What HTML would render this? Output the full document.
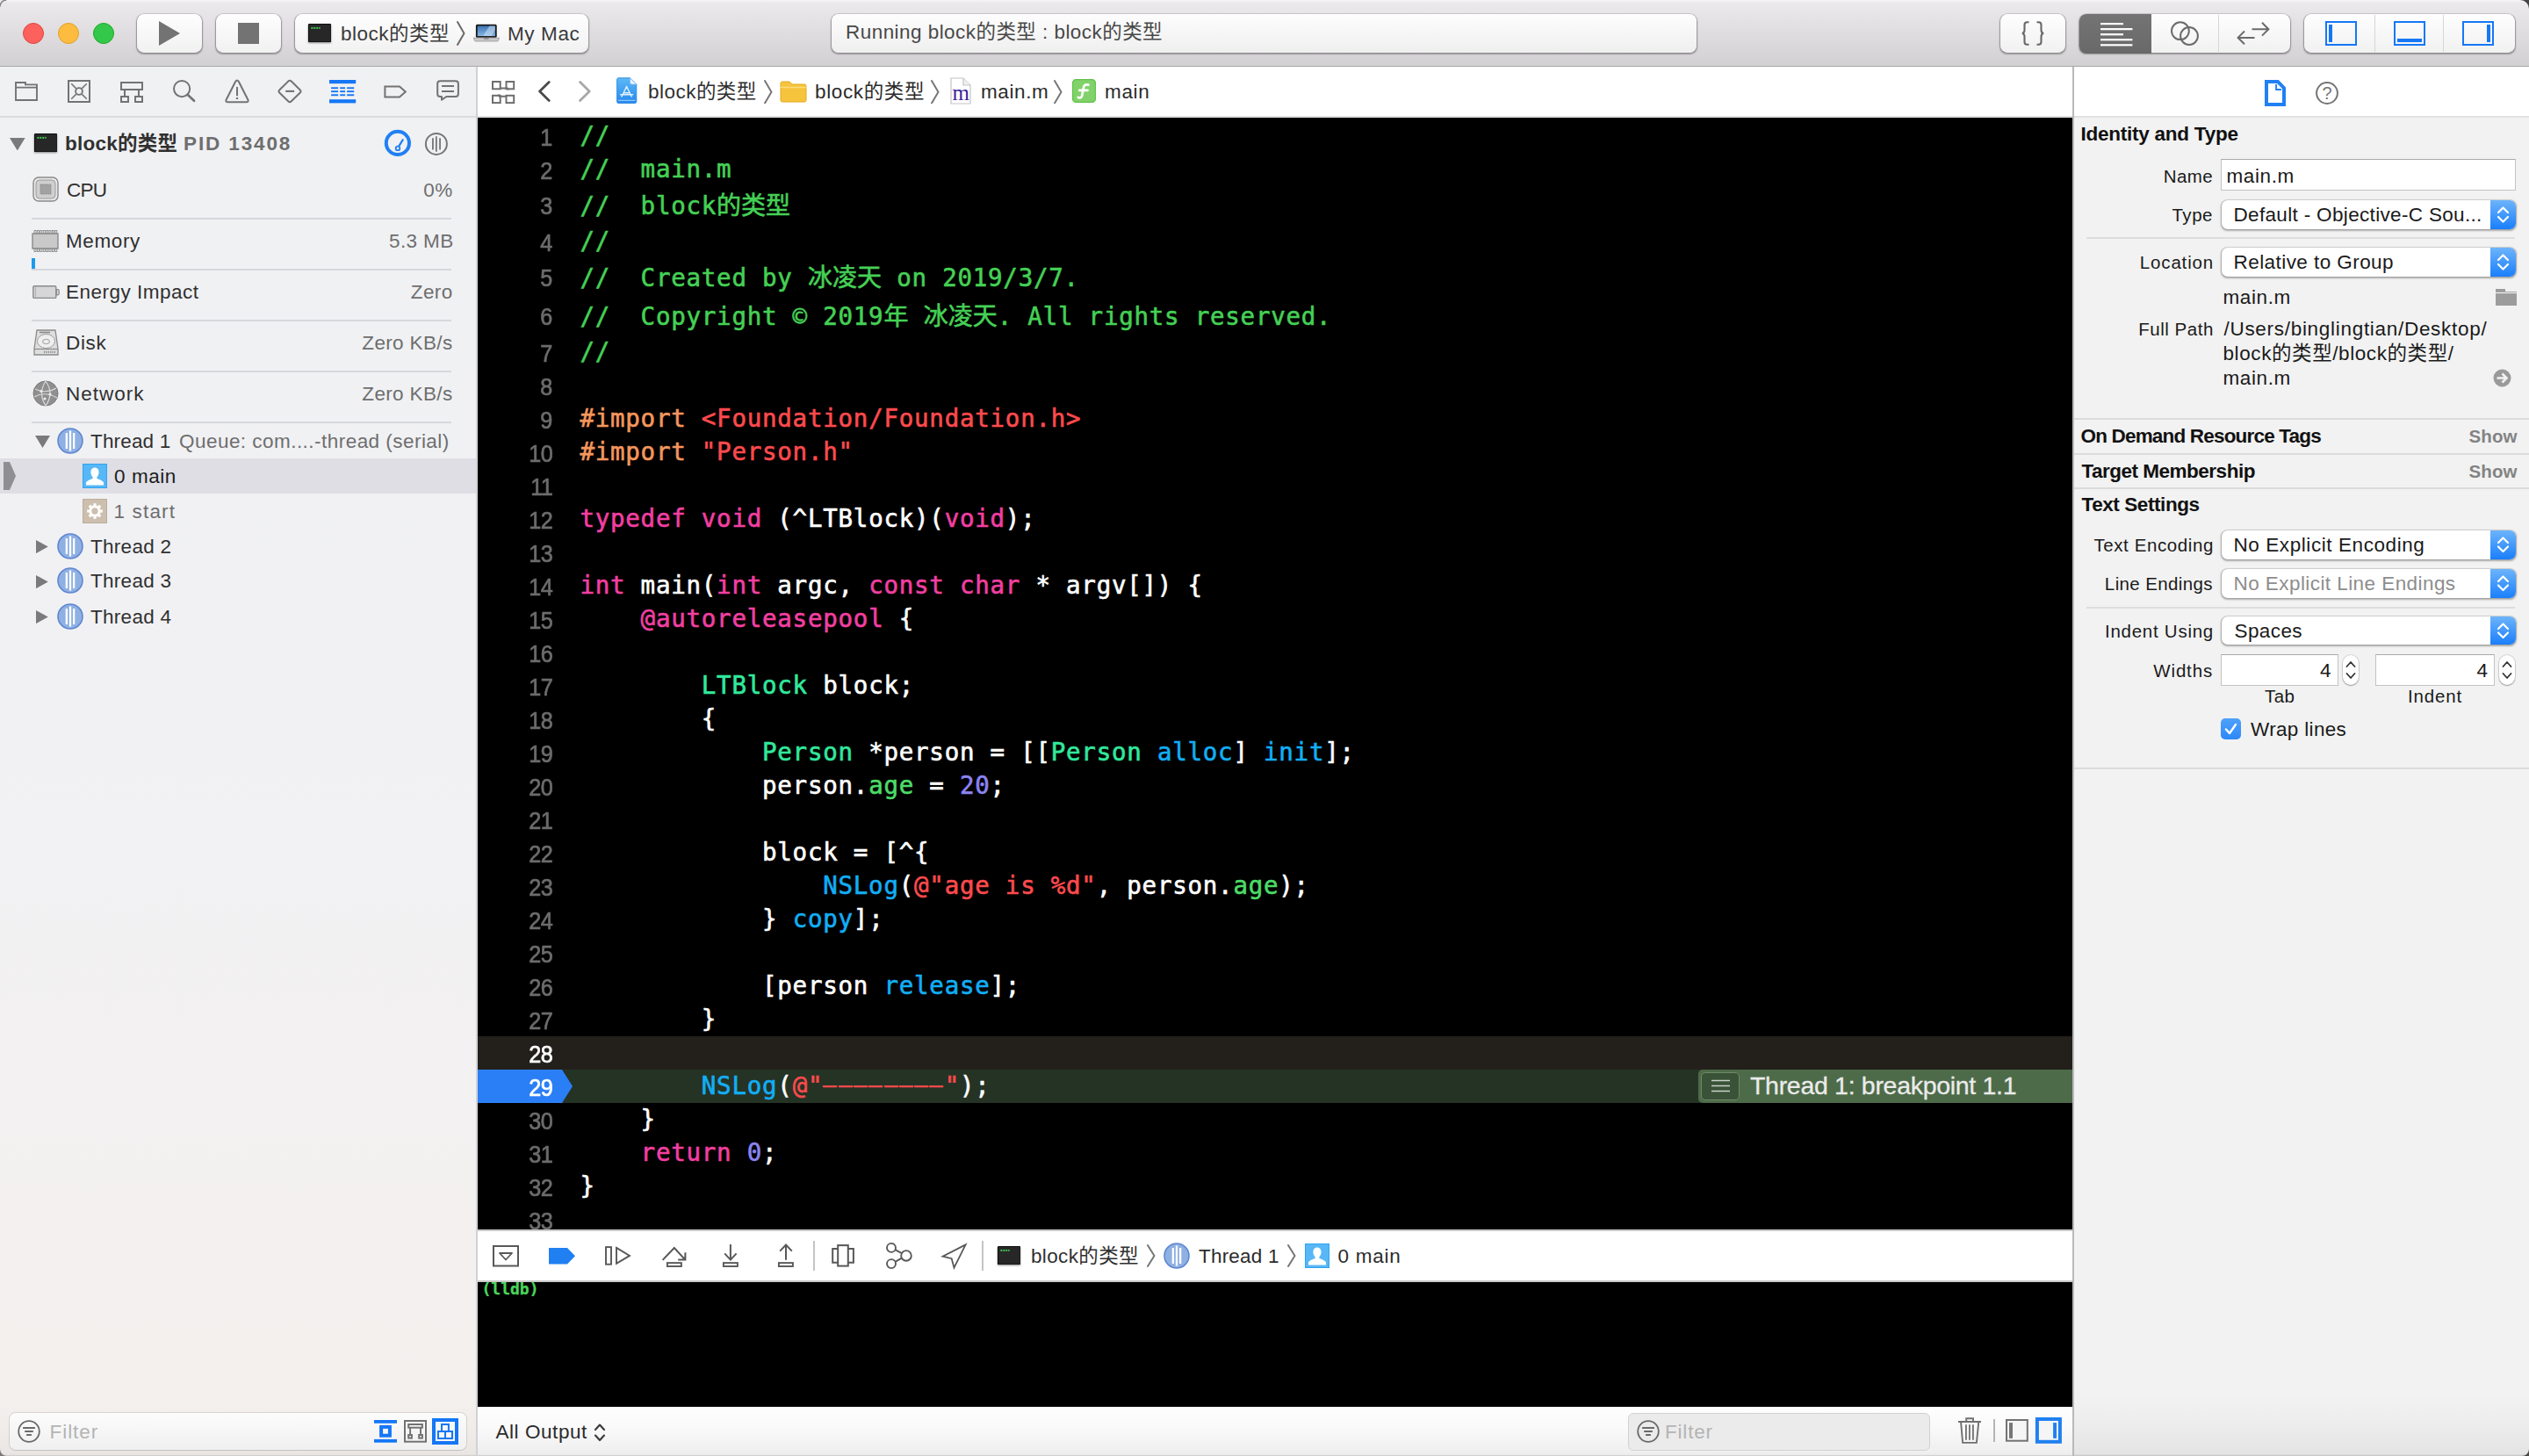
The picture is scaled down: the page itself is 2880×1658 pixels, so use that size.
<!DOCTYPE html><html><head><meta charset="utf-8"><title>Xcode</title><style>
*{box-sizing:border-box}
html,body{margin:0;padding:0}
body{width:2880px;height:1658px;overflow:hidden;position:relative;background:#000;font-family:"Liberation Sans","Noto Sans CJK SC",sans-serif;color:#303030}
.a{position:absolute;display:block}
.t{position:absolute;white-space:pre;line-height:1}
.m{font-family:"DejaVu Sans Mono","Noto Sans CJK SC",monospace}
.b{font-weight:bold}
.g{color:#6e6e6e}
#toolbar{left:0;top:0;width:2880px;height:76px;background:linear-gradient(#f4f4f4 0,#f2f1f2 1.5px,#ebe9eb 3px,#d2d0d2 100%);border-bottom:1.5px solid #a9a7a9}
.btn{border-radius:8.5px;background:linear-gradient(#fefefe,#f1f1f1);box-shadow:0 0 0 0.7px rgba(0,0,0,.13),0 1px 1.5px 0.3px rgba(0,0,0,.28)}
.pop{border-radius:7px;background:#fff;box-shadow:0 0 0 1px rgba(0,0,0,.08),0 1px 2px 0.5px rgba(0,0,0,.28)}
.popb{border-radius:0 7px 7px 0;background:linear-gradient(#6db4fb,#1a7ffb)}
.fld{background:#fff;border:1px solid #c3c3c3;border-top-color:#a9a9a9}
.sep{background:#dcdcdc;height:2px}
.ln{font-size:27.4px;-webkit-text-stroke:0.7px;letter-spacing:-0.6px;transform:scaleX(.92);transform-origin:100% 50%}
.cl{font-size:27.5px;letter-spacing:0.745px;-webkit-text-stroke:0.6px}
.cj{letter-spacing:0;font-size:28px}
.hy{display:inline-block;transform:translateY(-1.2px) scale(2.1,0.8)}
</style></head><body>
<div class="a" id="toolbar"></div>
<div class="a " style="left:26px;top:26px;width:24px;height:24px;border-radius:50%;background:#fc615d;border:1px solid #e0443e"></div>
<div class="a " style="left:66px;top:26px;width:24px;height:24px;border-radius:50%;background:#fdbc40;border:1px solid #dea123"></div>
<div class="a " style="left:106px;top:26px;width:24px;height:24px;border-radius:50%;background:#34c84a;border:1px solid #1aab29"></div>
<div class="a btn" style="left:156px;top:16px;width:74px;height:44px;"></div>
<svg class="a" style="left:181px;top:24px;" width="24" height="28" viewBox="0 0 24 28"><path d="M0 0 L24 14 L0 28Z" fill="#737373"/></svg>
<div class="a btn" style="left:246px;top:16px;width:74px;height:44px;"></div>
<div class="a " style="left:271px;top:26px;width:24px;height:24px;background:#737373"></div>
<div class="a btn" style="left:336px;top:16px;width:334px;height:44px;"></div>
<svg class="a" style="left:350.5px;top:27px;filter:drop-shadow(0 1px 1px rgba(0,0,0,.45))" width="26.325" height="21.45" viewBox="0 0 27 22"><rect x="0.5" y="0.5" width="26" height="21" rx="0.4" fill="#272727" stroke="#0b0b0b"/><rect x="3.5" y="4" width="2" height="2" fill="#3fd04f"/><rect x="6.5" y="4" width="2" height="2" fill="#3fd04f"/><rect x="9.5" y="4" width="2" height="2" fill="#3fd04f"/><rect x="12.5" y="4" width="1.5" height="2" fill="#3fd04f"/></svg>
<div id="t1" class="t" style="top:28.00px;font-size:22.5px;left:388.00px;letter-spacing:0.488px;color:#3a3a3a">block的类型</div>
<svg class="a" style="left:520px;top:24px;" width="10" height="28" viewBox="0 0 10 28"><path d="M1 1 L8.5 14 L1 27" fill="none" stroke="#6a6a6a" stroke-width="2" stroke-linecap="round" stroke-linejoin="round"/></svg>
<svg class="a" style="left:539px;top:26px;" width="30" height="23" viewBox="0 0 30 23"><defs><linearGradient id="scr" x1="0" y1="0" x2="0" y2="1"><stop offset="0" stop-color="#3f74b4"/><stop offset="1" stop-color="#86b6e6"/></linearGradient></defs><rect x="2.9" y="1.8" width="23.8" height="15" rx="1.6" fill="#151515"/><rect x="4.7" y="3.5" width="20.2" height="11.6" fill="url(#scr)"/><path d="M11 15.1 L18.5 3.5 H24.9 V8 L20.5 15.1Z" fill="#cfe3f7" opacity=".55"/><path d="M0.2 17.2 H29.6 L28.2 20.6 Q28 21 27.4 21 H2.4 Q1.8 21 1.6 20.6Z" fill="#c9c9cb" stroke="#8e8e90" stroke-width="0.7"/><rect x="12" y="17.3" width="5.6" height="1.3" fill="#7d7d7f"/></svg>
<div id="t2" class="t" style="top:28.00px;font-size:22.5px;left:578.00px;letter-spacing:0.600px;color:#3a3a3a">My Mac</div>
<div class="a " style="left:947px;top:16px;width:985px;height:44px;border-radius:8px;background:linear-gradient(#fdfdfd,#efefef);box-shadow:0 0 0 0.7px rgba(0,0,0,.13),0 1px 1.5px 0.3px rgba(0,0,0,.28)"></div>
<div id="t3" class="t" style="top:26.00px;font-size:22.5px;left:963.00px;letter-spacing:0.452px;color:#484848">Running block的类型 : block的类型</div>
<div class="a btn" style="left:2278px;top:16px;width:74px;height:44px;"></div>
<svg class="a" style="left:2300px;top:22px;" width="30" height="32" viewBox="0 0 30 32"><path d="M10.5 3.3 h-2 q-3 0 -3 3 v6 q0 3.2 -2.6 3.7 q2.6 0.5 2.6 3.7 v6 q0 3 3 3 h2 M19.5 3.3 h2 q3 0 3 3 v6 q0 3.2 2.6 3.7 q-2.6 0.5 -2.6 3.7 v6 q0 3 -3 3 h-2" fill="none" stroke="#686868" stroke-width="2.1"/></svg>
<div class="a btn" style="left:2368px;top:16px;width:240px;height:44px;"></div>
<div class="a " style="left:2367.5px;top:15.5px;width:82.5px;height:45px;border-radius:8px 0 0 8px;background:linear-gradient(#747474,#696969)"></div>
<div class="a " style="left:2526px;top:17px;width:1px;height:42px;background:#d6d6d6"></div>
<svg class="a" style="left:2392px;top:25.7px;" width="37" height="27" viewBox="0 0 37 27"><rect x="0" y="0" width="26" height="2.2" fill="#fff"/><rect x="0" y="6.05" width="36.4" height="2.2" fill="#fff"/><rect x="0" y="12.1" width="26" height="2.2" fill="#fff"/><rect x="0" y="18.1" width="36.4" height="2.2" fill="#fff"/><rect x="0" y="24.2" width="36.4" height="2.2" fill="#fff"/></svg>
<svg class="a" style="left:2470px;top:22px;" width="36" height="32" viewBox="0 0 36 32"><circle cx="12.9" cy="13.2" r="9.9" fill="none" stroke="#6b6b6b" stroke-width="2"/><circle cx="23" cy="19" r="9.9" fill="none" stroke="#6b6b6b" stroke-width="2"/></svg>
<svg class="a" style="left:2546px;top:22px;" width="40" height="32" viewBox="0 0 40 32"><path d="M18.5 11.2 H37 M30 3.8 L37.4 11.2 L30 18.6 M21.5 20.9 H3 M10 13.5 L2.6 20.9 L10 28.3" fill="none" stroke="#6b6b6b" stroke-width="2" stroke-linejoin="miter"/></svg>
<div class="a btn" style="left:2624px;top:16px;width:240px;height:44px;"></div>
<div class="a " style="left:2704px;top:17px;width:1px;height:42px;background:#d6d6d6"></div>
<div class="a " style="left:2782px;top:17px;width:1px;height:42px;background:#d6d6d6"></div>
<svg class="a" style="left:2648px;top:24px;" width="36" height="28" viewBox="0 0 36 28"><rect x="1" y="1" width="34" height="26" fill="none" stroke="#1577f6" stroke-width="2"/><rect x="4" y="4" width="4" height="20" fill="#1577f6"/></svg>
<svg class="a" style="left:2726px;top:24px;" width="36" height="28" viewBox="0 0 36 28"><rect x="1" y="1" width="34" height="26" fill="none" stroke="#1577f6" stroke-width="2"/><rect x="4" y="20" width="28" height="4" fill="#1577f6"/></svg>
<svg class="a" style="left:2804px;top:24px;" width="36" height="28" viewBox="0 0 36 28"><rect x="1" y="1" width="34" height="26" fill="none" stroke="#1577f6" stroke-width="2"/><rect x="28" y="4" width="4" height="20" fill="#1577f6"/></svg>
<div class="a " style="left:0px;top:76px;width:542px;height:1582px;background:linear-gradient(180deg,#f0f1f3 0%,#f1f1f4 45%,#f3f1f1 75%,#f3efec 100%)"></div>
<div class="a " style="left:542px;top:76px;width:2px;height:1582px;background:#d2d2d5"></div>
<div class="a " style="left:0px;top:132px;width:542px;height:2px;background:#dcdcde"></div>
<svg class="a" style="left:17px;top:93px;" width="26" height="22" viewBox="0 0 26 22"><path d="M1 1 H12 V3.4 H25 V21 H1Z M1 6.6 H25" fill="none" stroke="#737373" stroke-width="1.9" stroke-linejoin="miter"/></svg>
<svg class="a" style="left:77px;top:91px;" width="26" height="26" viewBox="0 0 26 26"><rect x="1" y="1" width="24" height="24" fill="none" stroke="#737373" stroke-width="2"/><circle cx="13" cy="13" r="3.9" fill="none" stroke="#737373" stroke-width="1.9"/><path d="M4.2 4.2 L9.6 9.6 M21.8 4.2 L16.4 9.6 M4.2 21.8 L9.6 16.4 M21.8 21.8 L16.4 16.4" stroke="#737373" stroke-width="1.5"/></svg>
<svg class="a" style="left:137px;top:93px;" width="26" height="24" viewBox="0 0 26 24"><rect x="1" y="1" width="24" height="8" fill="none" stroke="#737373" stroke-width="2"/><rect x="1" y="17" width="8" height="6" fill="none" stroke="#737373" stroke-width="2"/><rect x="17" y="17" width="8" height="6" fill="none" stroke="#737373" stroke-width="2"/><path d="M5 9 V17 M21 9 V17" fill="none" stroke="#737373" stroke-width="2"/></svg>
<svg class="a" style="left:196.8px;top:90.9px;" width="26" height="26" viewBox="0 0 26 26"><circle cx="10.1" cy="10.1" r="9.1" fill="none" stroke="#737373" stroke-width="2"/><path d="M16.6 16.8 L24 23.8" stroke="#737373" stroke-width="2.7" stroke-linecap="round"/></svg>
<svg class="a" style="left:256px;top:90px;" width="28" height="28" viewBox="0 0 28 28"><path d="M12.1 3 Q14 -0.2 15.9 3 L26.2 23.2 Q27.6 26.2 24.4 26.2 H3.6 Q0.4 26.2 1.8 23.2Z" fill="none" stroke="#737373" stroke-width="2" stroke-linejoin="round"/><path d="M14 9 V19.3" stroke="#737373" stroke-width="2"/><rect x="12.9" y="21" width="2.2" height="2" fill="#737373"/></svg>
<svg class="a" style="left:316px;top:90px;" width="28" height="28" viewBox="0 0 28 28"><path d="M12.2 2.6 Q14 0.9 15.8 2.6 L25.6 12.2 Q27.4 14 25.6 15.8 L15.8 25.3 Q14 27 12.2 25.3 L2.4 15.8 Q0.6 14 2.4 12.2Z" fill="none" stroke="#737373" stroke-width="2" stroke-linejoin="round"/><path d="M9.2 13.9 H19.1" stroke="#737373" stroke-width="2.1"/></svg>
<svg class="a" style="left:374.9px;top:90.8px;" width="31" height="27" viewBox="0 0 31 27"><rect x="0" y="0" width="30.2" height="4.2" fill="#1577f6"/><rect x="0" y="22.2" width="30.2" height="4.2" fill="#1577f6"/><rect x="2.1" y="8.3" width="8" height="1.9" fill="#1577f6"/><rect x="12.2" y="8.3" width="5.9" height="1.9" fill="#1577f6"/><rect x="20.1" y="8.3" width="8.1" height="1.9" fill="#1577f6"/><rect x="2.1" y="12.2" width="8" height="1.9" fill="#1577f6"/><rect x="12.2" y="12.2" width="5.9" height="1.9" fill="#1577f6"/><rect x="20.1" y="12.2" width="8.1" height="1.9" fill="#1577f6"/><rect x="2.1" y="16.3" width="8" height="1.9" fill="#1577f6"/><rect x="12.2" y="16.3" width="5.9" height="1.9" fill="#1577f6"/><rect x="20.1" y="16.3" width="8.1" height="1.9" fill="#1577f6"/></svg>
<svg class="a" style="left:436.5px;top:96.5px;" width="27" height="16" viewBox="0 0 27 16"><path d="M1.4 1.6 H18 L24.8 7.5 L18 13.5 H1.4Z" fill="none" stroke="#737373" stroke-width="2" stroke-linejoin="miter"/></svg>
<svg class="a" style="left:497px;top:91px;" width="27" height="25" viewBox="0 0 27 25"><path d="M4.2 1.2 H21.8 Q24.9 1.2 24.9 4.2 V16 Q24.9 19 21.8 19 H11.5 L6 22.6 V19 H4.2 Q1.2 19 1.2 16 V4.2 Q1.2 1.2 4.2 1.2Z" fill="none" stroke="#737373" stroke-width="2" stroke-linejoin="round"/><path d="M6 7 H20 M6 13.1 H20" stroke="#737373" stroke-width="2"/></svg>
<svg class="a" style="left:11px;top:156.5px;" width="17.6" height="14.5" viewBox="0 0 17.6 14.5"><path d="M0 0 H17.6 L8.8 14.5Z" fill="#7a7a7a"/></svg>
<svg class="a" style="left:38.5px;top:152px;filter:drop-shadow(0 1px 1px rgba(0,0,0,.45))" width="26.325" height="21.45" viewBox="0 0 27 22"><rect x="0.5" y="0.5" width="26" height="21" rx="0.4" fill="#272727" stroke="#0b0b0b"/><rect x="3.5" y="4" width="2" height="2" fill="#3fd04f"/><rect x="6.5" y="4" width="2" height="2" fill="#3fd04f"/><rect x="9.5" y="4" width="2" height="2" fill="#3fd04f"/><rect x="12.5" y="4" width="1.5" height="2" fill="#3fd04f"/></svg>
<div id="proc" class="t b" style="top:153.00px;font-size:22.5px;left:74.00px;letter-spacing:0.256px;">block的类型</div>
<div id="pid" class="t b g" style="top:153.00px;font-size:22.5px;left:209.00px;letter-spacing:1.875px;">PID 13408</div>
<svg class="a" style="left:436px;top:146px;" width="34" height="34" viewBox="0 0 34 34"><circle cx="16.9" cy="16.9" r="13.1" fill="none" stroke="#2080f4" stroke-width="4"/><path d="M18.3 20.4 L23.2 12.5" stroke="#2080f4" stroke-width="2.3" stroke-linecap="butt"/><circle cx="17" cy="22.9" r="2.3" fill="none" stroke="#2080f4" stroke-width="1.8"/></svg>
<svg class="a" style="left:483px;top:150px;" width="28" height="28" viewBox="0 0 28 28"><circle cx="13.9" cy="13.9" r="12" fill="none" stroke="#757575" stroke-width="2"/><path d="M9.95 7.3 V20.6 M13.85 5.2 V22.7 M18.05 7.3 V20.6" stroke="#757575" stroke-width="1.8"/></svg>
<div id="g0" class="t" style="top:206.00px;font-size:22.5px;left:76.00px;letter-spacing:-0.700px;">CPU</div>
<div id="gv0" class="t g" style="top:206.00px;font-size:22.5px;right:2364.50px;letter-spacing:0.350px;">0%</div>
<div id="g1" class="t" style="top:264.00px;font-size:22.5px;left:75.00px;letter-spacing:0.600px;">Memory</div>
<div id="gv1" class="t g" style="top:264.00px;font-size:22.5px;right:2363.50px;letter-spacing:0.350px;">5.3 MB</div>
<div id="g2" class="t" style="top:322.00px;font-size:22.5px;left:75.00px;letter-spacing:0.500px;">Energy Impact</div>
<div id="gv2" class="t g" style="top:322.00px;font-size:22.5px;right:2364.50px;letter-spacing:0.350px;">Zero</div>
<div id="g3" class="t" style="top:380.00px;font-size:22.5px;left:75.00px;letter-spacing:0.666px;">Disk</div>
<div id="gv3" class="t g" style="top:380.00px;font-size:22.5px;right:2364.50px;letter-spacing:0.350px;">Zero KB/s</div>
<div id="g4" class="t" style="top:438.00px;font-size:22.5px;left:75.00px;letter-spacing:0.999px;">Network</div>
<div id="gv4" class="t g" style="top:438.00px;font-size:22.5px;right:2364.50px;letter-spacing:0.350px;">Zero KB/s</div>
<div class="a " style="left:36px;top:248px;width:478px;height:2px;background:#d6d8dc"></div>
<div class="a " style="left:36px;top:306px;width:478px;height:2px;background:#d6d8dc"></div>
<div class="a " style="left:36px;top:364px;width:478px;height:2px;background:#d6d8dc"></div>
<div class="a " style="left:36px;top:422px;width:478px;height:2px;background:#d6d8dc"></div>
<div class="a " style="left:36px;top:480px;width:478px;height:2px;background:#d6d8dc"></div>
<div class="a " style="left:36px;top:294px;width:4px;height:12px;background:#1b9aee"></div>
<svg class="a" style="left:37px;top:201px;" width="30" height="29" viewBox="0 0 30 29"><rect x="1" y="1" width="28" height="27" rx="6" fill="#e9e9e9" stroke="#8a8a8a" stroke-width="1.4"/><rect x="4" y="4" width="22" height="21" rx="4" fill="#cfcfcf" stroke="#9a9a9a" stroke-width="1"/><rect x="9" y="9" width="12" height="11" fill="#a2a2a2" stroke="#8a8a8a" stroke-width="1" stroke-dasharray="1.5 1"/></svg>
<svg class="a" style="left:36px;top:262px;" width="31" height="25" viewBox="0 0 31 25"><rect x="1" y="4" width="29" height="17" fill="#c9c9c9" stroke="#8a8a8a" stroke-width="1.4"/><rect x="3" y="0.5" width="2" height="3.5" fill="none" stroke="#8a8a8a" stroke-width="0.9"/><rect x="3" y="21" width="2" height="3.5" fill="none" stroke="#8a8a8a" stroke-width="0.9"/><rect x="6.4" y="0.5" width="2" height="3.5" fill="none" stroke="#8a8a8a" stroke-width="0.9"/><rect x="6.4" y="21" width="2" height="3.5" fill="none" stroke="#8a8a8a" stroke-width="0.9"/><rect x="9.8" y="0.5" width="2" height="3.5" fill="none" stroke="#8a8a8a" stroke-width="0.9"/><rect x="9.8" y="21" width="2" height="3.5" fill="none" stroke="#8a8a8a" stroke-width="0.9"/><rect x="13.2" y="0.5" width="2" height="3.5" fill="none" stroke="#8a8a8a" stroke-width="0.9"/><rect x="13.2" y="21" width="2" height="3.5" fill="none" stroke="#8a8a8a" stroke-width="0.9"/><rect x="16.6" y="0.5" width="2" height="3.5" fill="none" stroke="#8a8a8a" stroke-width="0.9"/><rect x="16.6" y="21" width="2" height="3.5" fill="none" stroke="#8a8a8a" stroke-width="0.9"/><rect x="20" y="0.5" width="2" height="3.5" fill="none" stroke="#8a8a8a" stroke-width="0.9"/><rect x="20" y="21" width="2" height="3.5" fill="none" stroke="#8a8a8a" stroke-width="0.9"/><rect x="23.4" y="0.5" width="2" height="3.5" fill="none" stroke="#8a8a8a" stroke-width="0.9"/><rect x="23.4" y="21" width="2" height="3.5" fill="none" stroke="#8a8a8a" stroke-width="0.9"/><rect x="26.8" y="0.5" width="2" height="3.5" fill="none" stroke="#8a8a8a" stroke-width="0.9"/><rect x="26.8" y="21" width="2" height="3.5" fill="none" stroke="#8a8a8a" stroke-width="0.9"/></svg>
<svg class="a" style="left:37px;top:325px;" width="31" height="16" viewBox="0 0 31 16"><rect x="0.8" y="0.8" width="26" height="13.6" rx="1.2" fill="#d6d6d8" stroke="#8a8a8a" stroke-width="1.4"/><path d="M3.4 1.5 V13.8" stroke="#a9a9ab" stroke-width="0.9"/><path d="M27.3 4.6 H28.6 Q30.2 4.6 30.2 6.2 V9.2 Q30.2 10.8 28.6 10.8 H27.3Z" fill="#d6d6d8" stroke="#8a8a8a" stroke-width="1.2"/></svg>
<svg class="a" style="left:38px;top:375px;" width="29" height="30" viewBox="0 0 29 30"><path d="M4 1 H25 L28 22 V29 H1 V22Z" fill="#dedede" stroke="#8a8a8a" stroke-width="1.3"/><path d="M1 22.5 H28" stroke="#8a8a8a" stroke-width="1.2"/><ellipse cx="14.5" cy="13.5" rx="10" ry="8" fill="#efefef" stroke="#9a9a9a"/><ellipse cx="14.5" cy="14" rx="4" ry="2.6" fill="none" stroke="#9a9a9a"/><path d="M7 3.5 H19" stroke="#8a8a8a" stroke-width="1.6"/><path d="M12 25.8 H25" stroke="#8a8a8a" stroke-width="2.2" stroke-dasharray="1.2 1.2"/></svg>
<svg class="a" style="left:37px;top:433px;" width="30" height="30" viewBox="0 0 30 30"><circle cx="15" cy="15" r="14" fill="#8f8f8f" stroke="#7a7a7a"/><path d="M3 10 Q15 16 27 9 M2 19 Q14 12 28 20 M15 1 Q6 15 15 29 M15 1 Q25 15 15 29" fill="none" stroke="#d9d9d9" stroke-width="1.2"/><circle cx="10" cy="12.5" r="1.6" fill="#eee"/><circle cx="20" cy="16" r="1.6" fill="#eee"/><circle cx="14" cy="21" r="1.6" fill="#eee"/></svg>
<svg class="a" style="left:40px;top:496px;" width="17" height="14" viewBox="0 0 17 14"><path d="M0 0 H17 L8.5 14Z" fill="#7a7a7a"/></svg>
<svg class="a" style="left:65px;top:487px;" width="30" height="30" viewBox="0 0 30 30"><circle cx="15" cy="15" r="14" fill="#8fb0e3" stroke="#5f87d0" stroke-width="1.6"/><path d="M10.85 5.9 V24.1 M15 3.6 V26.4 M19.15 5.9 V24.1" stroke="#fff" stroke-width="2.3"/></svg>
<div id="th1" class="t" style="top:492.00px;font-size:22.5px;left:103.00px;letter-spacing:0.166px;">Thread 1</div>
<div id="th1q" class="t g" style="top:492.00px;font-size:22.5px;left:204.00px;letter-spacing:0.463px;">Queue: com....-thread (serial)</div>
<div class="a " style="left:0px;top:522px;width:542px;height:40px;background:#dfdee5"></div>
<svg class="a" style="left:4px;top:526px;" width="14" height="32" viewBox="0 0 14 32"><path d="M0 0 H7 L14 16 L7 32 H0Z" fill="#8e8e93"/></svg>
<svg class="a" style="left:94px;top:528px;" width="28" height="28" viewBox="0 0 28 28"><rect x="0.5" y="0.5" width="27" height="27" fill="#57b7f7" stroke="#30a4f0"/><path d="M14 4.5c3 0 4.6 2.3 4.6 5.2c0 2.5-1 4.5-2.2 5.6v1.6c2.6 1 6.6 2.4 7.6 4.4v3.2H4v-3.2c1-2 5-3.4 7.6-4.4v-1.6c-1.2-1.1-2.2-3.1-2.2-5.6c0-2.9 1.6-5.2 4.6-5.2z" fill="#fff"/></svg>
<div id="fr0" class="t" style="top:532.00px;font-size:22.5px;left:130.00px;letter-spacing:0.560px;color:#1d1d1d">0 main</div>
<svg class="a" style="left:94px;top:568px;" width="28" height="28" viewBox="0 0 28 28"><rect x="0.5" y="0.5" width="27" height="27" fill="#cdbfae" stroke="#bcae9c"/><circle cx="14" cy="14" r="5.2" fill="none" stroke="#fff" stroke-width="3"/><path d="M20.20 14.00 L22.80 14.00" stroke="#fff" stroke-width="3.2"/><path d="M18.38 18.38 L20.22 20.22" stroke="#fff" stroke-width="3.2"/><path d="M14.00 20.20 L14.00 22.80" stroke="#fff" stroke-width="3.2"/><path d="M9.62 18.38 L7.78 20.22" stroke="#fff" stroke-width="3.2"/><path d="M7.80 14.00 L5.20 14.00" stroke="#fff" stroke-width="3.2"/><path d="M9.62 9.62 L7.78 7.78" stroke="#fff" stroke-width="3.2"/><path d="M14.00 7.80 L14.00 5.20" stroke="#fff" stroke-width="3.2"/><path d="M18.38 9.62 L20.22 7.78" stroke="#fff" stroke-width="3.2"/></svg>
<div id="fr1" class="t g" style="top:572.00px;font-size:22.5px;left:129.50px;letter-spacing:1.166px;">1 start</div>
<svg class="a" style="left:41.4px;top:615px;" width="13.8" height="15.2" viewBox="0 0 13.8 15.2"><path d="M0 0 L13.8 7.6 L0 15.2Z" fill="#7a7a7a"/></svg>
<svg class="a" style="left:65px;top:606.5px;" width="30" height="30" viewBox="0 0 30 30"><circle cx="15" cy="15" r="14" fill="#8fb0e3" stroke="#5f87d0" stroke-width="1.6"/><path d="M10.85 5.9 V24.1 M15 3.6 V26.4 M19.15 5.9 V24.1" stroke="#fff" stroke-width="2.3"/></svg>
<div id="th2" class="t" style="top:612.00px;font-size:22.5px;left:103.00px;letter-spacing:0.285px;">Thread 2</div>
<svg class="a" style="left:41.4px;top:654.9px;" width="13.8" height="15.2" viewBox="0 0 13.8 15.2"><path d="M0 0 L13.8 7.6 L0 15.2Z" fill="#7a7a7a"/></svg>
<svg class="a" style="left:65px;top:646.4px;" width="30" height="30" viewBox="0 0 30 30"><circle cx="15" cy="15" r="14" fill="#8fb0e3" stroke="#5f87d0" stroke-width="1.6"/><path d="M10.85 5.9 V24.1 M15 3.6 V26.4 M19.15 5.9 V24.1" stroke="#fff" stroke-width="2.3"/></svg>
<div id="th3" class="t" style="top:651.00px;font-size:22.5px;left:103.00px;letter-spacing:0.285px;">Thread 3</div>
<svg class="a" style="left:41.4px;top:695px;" width="13.8" height="15.2" viewBox="0 0 13.8 15.2"><path d="M0 0 L13.8 7.6 L0 15.2Z" fill="#7a7a7a"/></svg>
<svg class="a" style="left:65px;top:686.5px;" width="30" height="30" viewBox="0 0 30 30"><circle cx="15" cy="15" r="14" fill="#8fb0e3" stroke="#5f87d0" stroke-width="1.6"/><path d="M10.85 5.9 V24.1 M15 3.6 V26.4 M19.15 5.9 V24.1" stroke="#fff" stroke-width="2.3"/></svg>
<div id="th4" class="t" style="top:692.00px;font-size:22.5px;left:103.00px;letter-spacing:0.285px;">Thread 4</div>
<div class="a " style="left:0px;top:1600px;width:542px;height:58px;background:linear-gradient(rgba(0,0,0,0),rgba(0,0,0,.015) 50%,rgba(0,0,0,.04) 97%,rgba(0,0,0,.18) 100%);pointer-events:none"></div>
<div class="a " style="left:10.7px;top:1608.6px;width:520.8px;height:42.6px;border-radius:7px;background:linear-gradient(#fcfcfc,#f0f0f0);box-shadow:0 0 0 1px rgba(90,70,60,.16),0 1px 1px rgba(0,0,0,.06)"></div>
<svg class="a" style="left:20px;top:1617px;" width="26" height="26" viewBox="0 0 26 26"><circle cx="13" cy="13" r="11.8" fill="none" stroke="#6a6a6a" stroke-width="1.8"/><path d="M6.1 9 H19.9 M8.2 13.05 H17.8 M10.1 17.1 H15.9" stroke="#6a6a6a" stroke-width="2"/></svg>
<div id="filt1" class="t" style="top:1620.00px;font-size:22.5px;left:56.50px;letter-spacing:0.960px;color:#b4b4b4">Filter</div>
<svg class="a" style="left:426px;top:1617.2px;" width="26" height="26" viewBox="0 0 26 26"><rect x="0" y="0" width="26" height="3.8" fill="#1577f6"/><rect x="0" y="21.9" width="26" height="3.8" fill="#1577f6"/><rect x="8.1" y="7.9" width="9.8" height="9.8" fill="none" stroke="#1577f6" stroke-width="4"/></svg>
<svg class="a" style="left:460px;top:1617.2px;" width="26" height="26" viewBox="0 0 26 26"><rect x="1" y="1" width="24" height="23.7" fill="none" stroke="#727272" stroke-width="2"/><rect x="5.2" y="5" width="15.7" height="3.7" fill="none" stroke="#727272" stroke-width="2"/><rect x="5.2" y="17" width="3.7" height="3.6" fill="none" stroke="#727272" stroke-width="2"/><rect x="17.2" y="17" width="3.7" height="3.6" fill="none" stroke="#727272" stroke-width="2"/><path d="M7.1 9 V16.5 M19 9 V16.5" stroke="#727272" stroke-width="1.9"/></svg>
<svg class="a" style="left:492px;top:1615px;" width="30" height="30" viewBox="0 0 30 30"><rect x="2" y="2" width="26" height="26" fill="#f6f6f6" stroke="#1577f6" stroke-width="4"/><rect x="11" y="7" width="7.9" height="8" fill="none" stroke="#1577f6" stroke-width="2"/><rect x="7" y="15" width="16" height="8" fill="none" stroke="#1577f6" stroke-width="2"/><path d="M15 15 V23" stroke="#1577f6" stroke-width="2"/></svg>
<div class="a " style="left:544px;top:76px;width:1816px;height:56px;background:#fff"></div>
<div class="a " style="left:544px;top:132px;width:1816px;height:2px;background:#dedede"></div>
<svg class="a" style="left:559.8px;top:91.8px;" width="27" height="27" viewBox="0 0 27 27"><rect x="1" y="1" width="8.7" height="8.3" fill="none" stroke="#6e6e6e" stroke-width="2"/><rect x="16.5" y="1" width="8.7" height="8.3" fill="none" stroke="#6e6e6e" stroke-width="2"/><rect x="1" y="16.8" width="8.7" height="8.3" fill="none" stroke="#6e6e6e" stroke-width="2"/><rect x="16.5" y="16.8" width="8.7" height="8.3" fill="none" stroke="#6e6e6e" stroke-width="2"/><path d="M10 8.6 H18.5 M8 17.8 H16.5 M18.5 8.6 V10.5 M8 15.5 V17.8" stroke="#6e6e6e" stroke-width="2" fill="none"/></svg>
<svg class="a" style="left:612px;top:92px;" width="16" height="24" viewBox="0 0 16 24"><path d="M13.2 1.6 L2.6 12 L13.2 22.4" fill="none" stroke="#4a4a4a" stroke-width="2.8" stroke-linecap="round" stroke-linejoin="round"/></svg>
<svg class="a" style="left:658.4px;top:92px;" width="16" height="24" viewBox="0 0 16 24"><path d="M2.6 1.6 L13.2 12 L2.6 22.4" fill="none" stroke="#a8a8a8" stroke-width="2.8" stroke-linecap="round" stroke-linejoin="round"/></svg>
<svg class="a" style="left:702.4px;top:88.4px;" width="24" height="31" viewBox="0 0 24 31"><defs><linearGradient id="xp" x1="0" y1="0" x2="0" y2="1"><stop offset="0" stop-color="#5cb9f6"/><stop offset="1" stop-color="#2588ef"/></linearGradient></defs><path d="M2.4 0.8 H15.5 L22.8 8 V27.6 Q22.8 29.6 20.8 29.6 H2.4 Q0.6 29.6 0.6 27.6 V2.6 Q0.6 0.8 2.4 0.8Z" fill="url(#xp)" stroke="#2d86df" stroke-width="0.9"/><path d="M15.5 0.8 V6 Q15.5 8 17.5 8 H22.8Z" fill="#e6f2fd" stroke="#7fb9ee" stroke-width="0.6"/><path d="M2 26.3 H21.4" stroke="#a8d4fa" stroke-width="1"/><path d="M11.6 10.5 L6 22 M11.6 10.5 L17.2 22 M8 17.8 H15.2 M4.6 19.8 H18.6" stroke="#e3f1fe" stroke-width="1.4" fill="none" stroke-linecap="round"/></svg>
<div id="jb1" class="t" style="top:94.00px;font-size:22.5px;left:738.00px;letter-spacing:0.471px;color:#303030">block的类型</div>
<svg class="a" style="left:870px;top:90.5px;" width="10" height="27.5" viewBox="0 0 10 27.5"><path d="M1 1 L8.5 13.75 L1 26.5" fill="none" stroke="#777" stroke-width="2" stroke-linecap="round" stroke-linejoin="round"/></svg>
<svg class="a" style="left:888px;top:92px;" width="31" height="25" viewBox="0 0 31 25"><path d="M1 3 Q1 1 3 1 H11 L14 4 H28 Q30 4 30 6 V22 Q30 24 28 24 H3 Q1 24 1 22Z" fill="#f5c33c" stroke="#e3ab1e" stroke-width="1"/><path d="M1 7.5 H30" stroke="#fbdc7a" stroke-width="1.5"/></svg>
<div id="jb2" class="t" style="top:94.00px;font-size:22.5px;left:928.00px;letter-spacing:0.631px;color:#2b2b2b">block的类型</div>
<svg class="a" style="left:1060px;top:90.5px;" width="10" height="27.5" viewBox="0 0 10 27.5"><path d="M1 1 L8.5 13.75 L1 26.5" fill="none" stroke="#777" stroke-width="2" stroke-linecap="round" stroke-linejoin="round"/></svg>
<svg class="a" style="left:1082px;top:88px;" width="24" height="31" viewBox="0 0 24 31"><path d="M1 1 H15 L23 9 V30 H1Z" fill="#fff" stroke="#c4c4c4" stroke-width="1.2"/><path d="M15 1 V9 H23" fill="#f0f0f0" stroke="#c4c4c4" stroke-width="1.2"/><text x="12.3" y="26.2" font-size="25" font-family="Liberation Serif,serif" fill="#3b1f9c" text-anchor="middle">m</text></svg>
<div id="jb3" class="t" style="top:94.00px;font-size:22.5px;left:1117.00px;letter-spacing:0.600px;color:#2b2b2b">main.m</div>
<svg class="a" style="left:1200px;top:90.5px;" width="10" height="27.5" viewBox="0 0 10 27.5"><path d="M1 1 L8.5 13.75 L1 26.5" fill="none" stroke="#777" stroke-width="2" stroke-linecap="round" stroke-linejoin="round"/></svg>
<svg class="a" style="left:1220.5px;top:90px;" width="27" height="27" viewBox="0 0 27 27"><rect x="0.5" y="0.5" width="26" height="26" rx="4.5" fill="#82d26c" stroke="#60c24a" stroke-width="1.4"/><path d="M18.5 6.6 Q13.6 5.2 12.9 10 L11.3 18.5 Q10.6 22.4 6.8 21 M8.2 12.8 H17.6" fill="none" stroke="#fff" stroke-width="2.7" stroke-linecap="round"/></svg>
<div id="jb4" class="t" style="top:94.00px;font-size:22.5px;left:1258.00px;letter-spacing:0.666px;color:#2b2b2b">main</div>
<div class="a " style="left:544px;top:134px;width:1816px;height:1266px;background:#000"></div>
<div class="a " style="left:544px;top:1180px;width:1816px;height:38px;background:#23201b"></div>
<div class="a " style="left:544px;top:1218px;width:1816px;height:38px;background:#253325"></div>
<svg class="a" style="left:544px;top:1218px;" width="108" height="38" viewBox="0 0 108 38"><path d="M0 0 H96 L108 19 L96 38 H0Z" fill="#2b7ff6"/></svg>
<div class="a " style="left:1934px;top:1218px;width:426px;height:38px;background:#4e6b49;border-radius:5px 0 0 5px"></div>
<div class="a " style="left:1937px;top:1221px;width:44px;height:32px;background:#3a5237;border:1.5px solid #6d8a67;border-radius:5px"></div>
<svg class="a" style="left:1949px;top:1229px;" width="21" height="15" viewBox="0 0 21 15"><path d="M0 1.5 H21 M0 7.5 H21 M0 13.5 H21" stroke="#c8d4c6" stroke-width="1.6"/></svg>
<div id="ann" class="t" style="top:1222.00px;font-size:28.5px;left:1993.00px;letter-spacing:-0.304px;color:#ebebeb;-webkit-text-stroke:0.3px">Thread 1: breakpoint 1.1</div>
<div class="a" style="left:544px;top:134px;width:1816px;height:1266px;overflow:hidden">
<div class="t ln" style="right:1730.9px;top:9.00px;color:#6c6c6c">1</div>
<div class="t m cl" style="left:116.4px;top:7.00px"><span style="color:#45d055">//</span></div>
<div class="t ln" style="right:1730.9px;top:47.00px;color:#6c6c6c">2</div>
<div class="t m cl" style="left:116.4px;top:45.00px"><span style="color:#45d055">//  main.m</span></div>
<div class="t ln" style="right:1730.9px;top:87.00px;color:#6c6c6c">3</div>
<div class="t m cl" style="left:116.4px;top:87.00px"><span style="color:#45d055">//  block</span><span style="color:#45d055"><span class="cj">的类型</span></span></div>
<div class="t ln" style="right:1730.9px;top:129.00px;color:#6c6c6c">4</div>
<div class="t m cl" style="left:116.4px;top:127.00px"><span style="color:#45d055">//</span></div>
<div class="t ln" style="right:1730.9px;top:169.00px;color:#6c6c6c">5</div>
<div class="t m cl" style="left:116.4px;top:169.00px"><span style="color:#45d055">//  Created by </span><span style="color:#45d055"><span class="cj">冰凌天</span></span><span style="color:#45d055"> on 2019/3/7.</span></div>
<div class="t ln" style="right:1730.9px;top:213.00px;color:#6c6c6c">6</div>
<div class="t m cl" style="left:116.4px;top:213.00px"><span style="color:#45d055">//  Copyright © 2019</span><span style="color:#45d055"><span class="cj">年</span></span><span style="color:#45d055"> </span><span style="color:#45d055"><span class="cj">冰凌天</span></span><span style="color:#45d055">. All rights reserved.</span></div>
<div class="t ln" style="right:1730.9px;top:255.00px;color:#6c6c6c">7</div>
<div class="t m cl" style="left:116.4px;top:253.00px"><span style="color:#45d055">//</span></div>
<div class="t ln" style="right:1730.9px;top:293.00px;color:#6c6c6c">8</div>
<div class="t ln" style="right:1730.9px;top:331.00px;color:#6c6c6c">9</div>
<div class="t m cl" style="left:116.4px;top:329.00px"><span style="color:#f4965c">#import </span><span style="color:#fc4a4d">&lt;Foundation/Foundation.h&gt;</span></div>
<div class="t ln" style="right:1730.9px;top:369.00px;color:#6c6c6c">10</div>
<div class="t m cl" style="left:116.4px;top:367.00px"><span style="color:#f4965c">#import </span><span style="color:#fc4a4d">"Person.h"</span></div>
<div class="t ln" style="right:1730.9px;top:407.00px;color:#6c6c6c">11</div>
<div class="t ln" style="right:1730.9px;top:445.00px;color:#6c6c6c">12</div>
<div class="t m cl" style="left:116.4px;top:443.00px"><span style="color:#f23fa1">typedef void</span><span style="color:#fff"> (^LTBlock)(</span><span style="color:#f23fa1">void</span><span style="color:#fff">);</span></div>
<div class="t ln" style="right:1730.9px;top:483.00px;color:#6c6c6c">13</div>
<div class="t ln" style="right:1730.9px;top:521.00px;color:#6c6c6c">14</div>
<div class="t m cl" style="left:116.4px;top:519.00px"><span style="color:#f23fa1">int</span><span style="color:#fff"> main(</span><span style="color:#f23fa1">int</span><span style="color:#fff"> argc, </span><span style="color:#f23fa1">const char</span><span style="color:#fff"> * argv[]) {</span></div>
<div class="t ln" style="right:1730.9px;top:559.00px;color:#6c6c6c">15</div>
<div class="t m cl" style="left:116.4px;top:557.00px"><span style="color:#fff">    </span><span style="color:#f23fa1">@autoreleasepool</span><span style="color:#fff"> {</span></div>
<div class="t ln" style="right:1730.9px;top:597.00px;color:#6c6c6c">16</div>
<div class="t ln" style="right:1730.9px;top:635.00px;color:#6c6c6c">17</div>
<div class="t m cl" style="left:116.4px;top:633.00px"><span style="color:#fff">        </span><span style="color:#31e89c">LTBlock</span><span style="color:#fff"> block;</span></div>
<div class="t ln" style="right:1730.9px;top:673.00px;color:#6c6c6c">18</div>
<div class="t m cl" style="left:116.4px;top:671.00px"><span style="color:#fff">        {</span></div>
<div class="t ln" style="right:1730.9px;top:711.00px;color:#6c6c6c">19</div>
<div class="t m cl" style="left:116.4px;top:709.00px"><span style="color:#fff">            </span><span style="color:#31e89c">Person</span><span style="color:#fff"> *person = [[</span><span style="color:#31e89c">Person</span><span style="color:#fff"> </span><span style="color:#12aef5">alloc</span><span style="color:#fff">] </span><span style="color:#12aef5">init</span><span style="color:#fff">];</span></div>
<div class="t ln" style="right:1730.9px;top:749.00px;color:#6c6c6c">20</div>
<div class="t m cl" style="left:116.4px;top:747.00px"><span style="color:#fff">            person.</span><span style="color:#4bdc66">age</span><span style="color:#fff"> = </span><span style="color:#8c84f2">20</span><span style="color:#fff">;</span></div>
<div class="t ln" style="right:1730.9px;top:787.00px;color:#6c6c6c">21</div>
<div class="t ln" style="right:1730.9px;top:825.00px;color:#6c6c6c">22</div>
<div class="t m cl" style="left:116.4px;top:823.00px"><span style="color:#fff">            block = [^{</span></div>
<div class="t ln" style="right:1730.9px;top:863.00px;color:#6c6c6c">23</div>
<div class="t m cl" style="left:116.4px;top:861.00px"><span style="color:#fff">                </span><span style="color:#12aef5">NSLog</span><span style="color:#fff">(</span><span style="color:#fc4a4d">@"age is %d"</span><span style="color:#fff">, person.</span><span style="color:#4bdc66">age</span><span style="color:#fff">);</span></div>
<div class="t ln" style="right:1730.9px;top:901.00px;color:#6c6c6c">24</div>
<div class="t m cl" style="left:116.4px;top:899.00px"><span style="color:#fff">            } </span><span style="color:#12aef5">copy</span><span style="color:#fff">];</span></div>
<div class="t ln" style="right:1730.9px;top:939.00px;color:#6c6c6c">25</div>
<div class="t ln" style="right:1730.9px;top:977.00px;color:#6c6c6c">26</div>
<div class="t m cl" style="left:116.4px;top:975.00px"><span style="color:#fff">            [person </span><span style="color:#12aef5">release</span><span style="color:#fff">];</span></div>
<div class="t ln" style="right:1730.9px;top:1015.00px;color:#6c6c6c">27</div>
<div class="t m cl" style="left:116.4px;top:1013.00px"><span style="color:#fff">        }</span></div>
<div class="t ln" style="right:1730.9px;top:1053.00px;color:#fff">28</div>
<div class="t ln" style="right:1730.9px;top:1091.00px;color:#fff">29</div>
<div class="t m cl" style="left:116.4px;top:1089.00px"><span style="color:#fff">        </span><span style="color:#12aef5">NSLog</span><span style="color:#fff">(</span><span style="color:#fc4a4d">@"<span class="hy">-</span><span class="hy">-</span><span class="hy">-</span><span class="hy">-</span><span class="hy">-</span><span class="hy">-</span><span class="hy">-</span><span class="hy">-</span>"</span><span style="color:#fff">);</span></div>
<div class="t ln" style="right:1730.9px;top:1129.00px;color:#6c6c6c">30</div>
<div class="t m cl" style="left:116.4px;top:1127.00px"><span style="color:#fff">    }</span></div>
<div class="t ln" style="right:1730.9px;top:1167.00px;color:#6c6c6c">31</div>
<div class="t m cl" style="left:116.4px;top:1165.00px"><span style="color:#fff">    </span><span style="color:#f23fa1">return</span><span style="color:#fff"> </span><span style="color:#8c84f2">0</span><span style="color:#fff">;</span></div>
<div class="t ln" style="right:1730.9px;top:1205.00px;color:#6c6c6c">32</div>
<div class="t m cl" style="left:116.4px;top:1203.00px"><span style="color:#fff">}</span></div>
<div class="t ln" style="right:1730.9px;top:1243.00px;color:#6c6c6c">33</div>
</div>
<div class="a " style="left:544px;top:1400px;width:1816px;height:2px;background:#c9c9c9"></div>
<div class="a " style="left:544px;top:1402px;width:1816px;height:56px;background:#fff"></div>
<div class="a " style="left:544px;top:1458px;width:1816px;height:2px;background:#c9c9c9"></div>
<svg class="a" style="left:561px;top:1418px;" width="30" height="25" viewBox="0 0 30 25"><rect x="1" y="1" width="28" height="22.5" fill="none" stroke="#585858" stroke-width="2"/><path d="M8 9 H22 L15 16.5Z" fill="none" stroke="#585858" stroke-width="1.8" stroke-linejoin="round"/></svg>
<svg class="a" style="left:625px;top:1420.8px;" width="31" height="19" viewBox="0 0 31 19"><path d="M0 0 H21 L30 9.2 L21 18.4 H0Z" fill="#2080f2"/></svg>
<svg class="a" style="left:689px;top:1419px;" width="31" height="23" viewBox="0 0 31 23"><rect x="1" y="1.1" width="6" height="19.6" fill="none" stroke="#585858" stroke-width="1.9"/><path d="M13 1.9 L28 10.9 L13 19.9Z" fill="none" stroke="#585858" stroke-width="1.9" stroke-linejoin="miter"/></svg>
<svg class="a" style="left:753px;top:1418px;" width="30" height="27" viewBox="0 0 30 27"><path d="M1.6 16.9 L14.8 3 L27.2 16.4" fill="none" stroke="#585858" stroke-width="2" stroke-linejoin="miter"/><path d="M27.4 8.3 V16.6 H19.2" fill="none" stroke="#585858" stroke-width="2"/><path d="M27.4 12.5 L27.4 16.6 L23.5 16.6Z" fill="#585858"/><rect x="6.9" y="20.1" width="16" height="3.9" fill="none" stroke="#585858" stroke-width="1.9"/></svg>
<svg class="a" style="left:821px;top:1416px;" width="22" height="28" viewBox="0 0 22 28"><path d="M10.9 1 V18 M4.2 11.4 L10.9 18.6 L17.6 11.4" fill="none" stroke="#585858" stroke-width="2" stroke-linejoin="miter"/><rect x="2.9" y="22.1" width="16" height="3.9" fill="none" stroke="#585858" stroke-width="1.9"/></svg>
<svg class="a" style="left:884px;top:1416px;" width="22" height="28" viewBox="0 0 22 28"><path d="M11 18.8 V2.4 M4.2 8.6 L11 1.5 L17.8 8.6" fill="none" stroke="#585858" stroke-width="2" stroke-linejoin="miter"/><rect x="2.9" y="22.1" width="16" height="3.9" fill="none" stroke="#585858" stroke-width="1.9"/></svg>
<div class="a " style="left:926px;top:1413px;width:2px;height:34px;background:#c4c4c4"></div>
<svg class="a" style="left:946px;top:1417px;" width="28" height="27" viewBox="0 0 28 27"><rect x="8.2" y="1.1" width="11.6" height="23.5" fill="none" stroke="#585858" stroke-width="2"/><path d="M8.2 5 H2.2 V20.7 H8.2 M19.8 5 H25.9 V20.7 H19.8" fill="none" stroke="#585858" stroke-width="2"/></svg>
<svg class="a" style="left:1008px;top:1414px;" width="32" height="32" viewBox="0 0 32 32"><circle cx="7" cy="6.9" r="5" fill="none" stroke="#585858" stroke-width="1.9"/><circle cx="24" cy="15.9" r="5.8" fill="none" stroke="#585858" stroke-width="1.9"/><circle cx="7" cy="25.1" r="5" fill="none" stroke="#585858" stroke-width="1.9"/><path d="M11.4 9.2 L18.9 13.2 M11.4 22.8 L18.9 18.7" stroke="#585858" stroke-width="1.9"/></svg>
<svg class="a" style="left:1071px;top:1415px;" width="31" height="31" viewBox="0 0 31 31"><path d="M28.6 2.4 L2.6 15.6 L12.7 18.2 L15.5 28.6Z" fill="none" stroke="#585858" stroke-width="1.8" stroke-linejoin="miter"/></svg>
<div class="a " style="left:1118px;top:1413px;width:2px;height:34px;background:#c4c4c4"></div>
<svg class="a" style="left:1136px;top:1418.5px;filter:drop-shadow(0 1px 1px rgba(0,0,0,.45))" width="26.325" height="21.45" viewBox="0 0 27 22"><rect x="0.5" y="0.5" width="26" height="21" rx="0.4" fill="#272727" stroke="#0b0b0b"/><rect x="3.5" y="4" width="2" height="2" fill="#3fd04f"/><rect x="6.5" y="4" width="2" height="2" fill="#3fd04f"/><rect x="9.5" y="4" width="2" height="2" fill="#3fd04f"/><rect x="12.5" y="4" width="1.5" height="2" fill="#3fd04f"/></svg>
<div id="db1" class="t" style="top:1420.00px;font-size:22.5px;left:1174.00px;letter-spacing:0.358px;color:#303030">block的类型</div>
<svg class="a" style="left:1306.4px;top:1417px;" width="10" height="26" viewBox="0 0 10 26"><path d="M1 1 L8.5 13 L1 25" fill="none" stroke="#777" stroke-width="2" stroke-linecap="round" stroke-linejoin="round"/></svg>
<svg class="a" style="left:1325px;top:1415px;" width="30" height="30" viewBox="0 0 30 30"><circle cx="15" cy="15" r="14" fill="#8fb0e3" stroke="#5f87d0" stroke-width="1.6"/><path d="M10.85 5.9 V24.1 M15 3.6 V26.4 M19.15 5.9 V24.1" stroke="#fff" stroke-width="2.3"/></svg>
<div id="db2" class="t" style="top:1420.00px;font-size:22.5px;left:1365.00px;letter-spacing:0.203px;color:#2b2b2b">Thread 1</div>
<svg class="a" style="left:1465.6px;top:1417px;" width="10" height="26" viewBox="0 0 10 26"><path d="M1 1 L8.5 13 L1 25" fill="none" stroke="#777" stroke-width="2" stroke-linecap="round" stroke-linejoin="round"/></svg>
<svg class="a" style="left:1486px;top:1416px;" width="28" height="28" viewBox="0 0 28 28"><rect x="0.5" y="0.5" width="27" height="27" fill="#57b7f7" stroke="#30a4f0"/><path d="M14 4.5c3 0 4.6 2.3 4.6 5.2c0 2.5-1 4.5-2.2 5.6v1.6c2.6 1 6.6 2.4 7.6 4.4v3.2H4v-3.2c1-2 5-3.4 7.6-4.4v-1.6c-1.2-1.1-2.2-3.1-2.2-5.6c0-2.9 1.6-5.2 4.6-5.2z" fill="#fff"/></svg>
<div id="db3" class="t" style="top:1420.00px;font-size:22.5px;left:1523.50px;letter-spacing:0.760px;color:#2b2b2b">0 main</div>
<div class="a " style="left:544px;top:1460px;width:1816px;height:142px;background:#000;overflow:hidden"><div class="t m b" style="left:4.5px;top:-1px;font-size:18px;color:#4bd35a;-webkit-text-stroke:0.3px">(lldb)</div></div>
<div class="a " style="left:544px;top:1602px;width:1816px;height:56px;background:linear-gradient(#fefefe,#fafafa 40%,#eeeeee 97%,#c6c6c6 100%)"></div>
<div id="allout" class="t" style="top:1620.00px;font-size:22.5px;left:564.50px;letter-spacing:0.556px;color:#2b2b2b">All Output</div>
<svg class="a" style="left:676px;top:1617px;" width="14" height="26" viewBox="0 0 14 26"><path d="M2 11 L7 5.6 L12 11 M2 17.6 L7 23 L12 17.6" fill="none" stroke="#3c3c3c" stroke-width="2.2" stroke-linecap="round" stroke-linejoin="round"/></svg>
<div class="a " style="left:1854px;top:1608.5px;width:344px;height:43px;border-radius:6px;background:#ebebeb;border:1px solid #d2d2d2"></div>
<svg class="a" style="left:1864px;top:1617px;" width="26" height="26" viewBox="0 0 26 26"><circle cx="13" cy="13" r="11.8" fill="none" stroke="#6a6a6a" stroke-width="1.8"/><path d="M6.1 9 H19.9 M8.2 13.05 H17.8 M10.1 17.1 H15.9" stroke="#6a6a6a" stroke-width="2"/></svg>
<div id="filt2" class="t" style="top:1620.00px;font-size:22.5px;left:1896.00px;letter-spacing:0.800px;color:#b4b4b4">Filter</div>
<svg class="a" style="left:2229px;top:1613px;" width="28" height="32" viewBox="0 0 28 32"><path d="M1 6 H27 M10.2 6 V2.2 H18 V6 M4.1 6.8 L6.1 29.9 H21.9 L24.2 6.8" fill="none" stroke="#707070" stroke-width="1.9" stroke-linejoin="miter"/><path d="M9.9 9.2 V26.7 M13.9 9.2 V26.7 M17.9 9.2 V26.7" stroke="#707070" stroke-width="1.8"/></svg>
<div class="a " style="left:2270px;top:1616px;width:2px;height:26px;background:#b5b5b5"></div>
<svg class="a" style="left:2284px;top:1616px;" width="26" height="26" viewBox="0 0 26 26"><rect x="1" y="1" width="23.8" height="23.7" fill="#f5f5f5" stroke="#727272" stroke-width="2"/><rect x="4" y="4.1" width="4" height="17.8" fill="#767676"/></svg>
<svg class="a" style="left:2317px;top:1613px;" width="32" height="32" viewBox="0 0 32 32"><rect x="2.9" y="3" width="26" height="25.8" fill="#f5f5f5" stroke="#2080f0" stroke-width="4"/><rect x="21.1" y="7.1" width="3.9" height="17.8" fill="#2080f0"/></svg>
<div class="a " style="left:2360px;top:76px;width:2px;height:1582px;background:#b9b9b9"></div>
<div class="a " style="left:2362px;top:76px;width:518px;height:56px;background:#fff"></div>
<div class="a " style="left:2362px;top:132px;width:518px;height:2px;background:#e2e2e2"></div>
<div class="a " style="left:2362px;top:134px;width:518px;height:1524px;background:#f2f2f2"></div>
<svg class="a" style="left:2579px;top:91px;" width="24" height="30" viewBox="0 0 24 30"><path d="M2 2 H15 L22 9.2 V27.9 H2Z" fill="none" stroke="#2080f4" stroke-width="4" stroke-linejoin="miter"/><path d="M13.1 5.1 V11 H19" fill="none" stroke="#2080f4" stroke-width="1.9"/></svg>
<svg class="a" style="left:2636px;top:92px;" width="28" height="28" viewBox="0 0 28 28"><circle cx="14" cy="14" r="11.9" fill="none" stroke="#757575" stroke-width="2"/><text x="14" y="21" font-size="20" font-family="Liberation Sans,sans-serif" fill="#757575" text-anchor="middle">?</text></svg>
<div id="i_h1" class="t b" style="top:142.00px;font-size:22.5px;left:2369.50px;letter-spacing:-0.243px;color:#111">Identity and Type</div>
<div id="l_name" class="t" style="top:191.00px;font-size:20.5px;right:360.00px;letter-spacing:0.402px;color:#1a1a1a">Name</div>
<div class="a fld" style="left:2529px;top:181px;width:336px;height:36px;"></div>
<div id="v_name" class="t" style="top:190.00px;font-size:22.5px;left:2535.50px;letter-spacing:0.600px;color:#1a1a1a">main.m</div>
<div id="l_type" class="t" style="top:235.00px;font-size:20.5px;right:360.00px;letter-spacing:0.533px;color:#1a1a1a">Type</div>
<div class="a pop" style="left:2530px;top:227.5px;width:335px;height:33px;"></div>
<div class="a popb" style="left:2836px;top:227.5px;width:29px;height:33px;"></div>
<svg class="a" style="left:2843px;top:233.5px;" width="15" height="21" viewBox="0 0 15 21"><path d="M2 8 L7.5 2.5 L13 8 M2 13 L7.5 18.5 L13 13" fill="none" stroke="#fff" stroke-width="2.2" stroke-linecap="round" stroke-linejoin="round"/></svg>
<div id="p_type" class="t" style="top:234.00px;font-size:22.5px;left:2543.50px;letter-spacing:0.333px;color:#1a1a1a">Default - Objective-C Sou...</div>
<div class="a " style="left:2376px;top:270px;width:488px;height:2px;background:#dddddd"></div>
<div id="l_loc" class="t" style="top:289.00px;font-size:20.5px;right:359.00px;letter-spacing:0.830px;color:#1a1a1a">Location</div>
<div class="a pop" style="left:2530px;top:281.5px;width:335px;height:33px;"></div>
<div class="a popb" style="left:2836px;top:281.5px;width:29px;height:33px;"></div>
<svg class="a" style="left:2843px;top:287.5px;" width="15" height="21" viewBox="0 0 15 21"><path d="M2 8 L7.5 2.5 L13 8 M2 13 L7.5 18.5 L13 13" fill="none" stroke="#fff" stroke-width="2.2" stroke-linecap="round" stroke-linejoin="round"/></svg>
<div id="p_loc" class="t" style="top:288.00px;font-size:22.5px;left:2543.50px;letter-spacing:0.437px;color:#1a1a1a">Relative to Group</div>
<div id="v_loc" class="t" style="top:328.00px;font-size:22.5px;left:2531.50px;letter-spacing:0.600px;color:#1a1a1a">main.m</div>
<svg class="a" style="left:2842px;top:328px;" width="24" height="20" viewBox="0 0 24 20"><path d="M0 1 H11 V4 H24 V20 H0Z" fill="#9c9c9c"/><path d="M0 5.5 H24" stroke="#f2f2f2" stroke-width="1.2"/></svg>
<div id="l_fp" class="t" style="top:365.00px;font-size:20.5px;right:359.00px;letter-spacing:0.550px;color:#1a1a1a">Full Path</div>
<div id="fp1" class="t" style="top:364.00px;font-size:22.5px;left:2532.50px;letter-spacing:0.704px;color:#1a1a1a">/Users/binglingtian/Desktop/</div>
<div id="fp2" class="t" style="top:392.00px;font-size:22.5px;left:2531.50px;letter-spacing:0.588px;color:#1a1a1a">block的类型/block的类型/</div>
<div id="fp3" class="t" style="top:420.00px;font-size:22.5px;left:2531.50px;letter-spacing:0.600px;color:#1a1a1a">main.m</div>
<svg class="a" style="left:2839px;top:420px;" width="21" height="21" viewBox="0 0 21 21"><circle cx="10.5" cy="10.5" r="10" fill="#9a9a9a"/><path d="M4.5 10.5 H15 M10.5 5.5 L15.5 10.5 L10.5 15.5" fill="none" stroke="#f2f2f2" stroke-width="2.6"/></svg>
<div class="a " style="left:2362px;top:476px;width:518px;height:2px;background:#dcdcdc"></div>
<div id="i_h2" class="t b" style="top:486.00px;font-size:22.5px;left:2369.50px;letter-spacing:-0.819px;color:#111">On Demand Resource Tags</div>
<div id="sh1" class="t b" style="top:487.00px;font-size:20.5px;right:13.50px;letter-spacing:0.067px;color:#838383">Show</div>
<div class="a " style="left:2362px;top:516px;width:518px;height:2px;background:#dcdcdc"></div>
<div id="i_h3" class="t b" style="top:526.00px;font-size:22.5px;left:2370.50px;letter-spacing:-0.500px;color:#111">Target Membership</div>
<div id="sh2" class="t b" style="top:527.00px;font-size:20.5px;right:13.50px;letter-spacing:0.067px;color:#838383">Show</div>
<div class="a " style="left:2362px;top:555px;width:518px;height:2px;background:#dcdcdc"></div>
<div id="i_h4" class="t b" style="top:564.00px;font-size:22.5px;left:2370.50px;letter-spacing:-0.417px;color:#111">Text Settings</div>
<div id="l_te" class="t" style="top:611.00px;font-size:20.5px;right:359.00px;letter-spacing:0.602px;color:#1a1a1a">Text Encoding</div>
<div class="a pop" style="left:2530px;top:604px;width:335px;height:32.5px;"></div>
<div class="a popb" style="left:2836px;top:604px;width:29px;height:32.5px;"></div>
<svg class="a" style="left:2843px;top:610px;" width="15" height="20.5" viewBox="0 0 15 20.5"><path d="M2 8 L7.5 2.5 L13 8 M2 12.5 L7.5 18 L13 12.5" fill="none" stroke="#fff" stroke-width="2.2" stroke-linecap="round" stroke-linejoin="round"/></svg>
<div id="p_te" class="t" style="top:610.00px;font-size:22.5px;left:2543.50px;letter-spacing:0.580px;color:#1a1a1a">No Explicit Encoding</div>
<div id="l_le" class="t" style="top:655.00px;font-size:20.5px;right:360.00px;letter-spacing:0.383px;color:#1a1a1a">Line Endings</div>
<div class="a pop" style="left:2530px;top:648px;width:335px;height:32.5px;"></div>
<div class="a popb" style="left:2836px;top:648px;width:29px;height:32.5px;"></div>
<svg class="a" style="left:2843px;top:654px;" width="15" height="20.5" viewBox="0 0 15 20.5"><path d="M2 8 L7.5 2.5 L13 8 M2 12.5 L7.5 18 L13 12.5" fill="none" stroke="#fff" stroke-width="2.2" stroke-linecap="round" stroke-linejoin="round"/></svg>
<div id="p_le" class="t" style="top:654.00px;font-size:22.5px;left:2543.50px;letter-spacing:0.434px;color:#8d8d8d">No Explicit Line Endings</div>
<div class="a " style="left:2376px;top:690.5px;width:488px;height:2px;background:#dddddd"></div>
<div id="l_iu" class="t" style="top:709.00px;font-size:20.5px;right:359.00px;letter-spacing:0.746px;color:#1a1a1a">Indent Using</div>
<div class="a pop" style="left:2530px;top:701.7px;width:335px;height:32.5px;"></div>
<div class="a popb" style="left:2836px;top:701.7px;width:29px;height:32.5px;"></div>
<svg class="a" style="left:2843px;top:707.7px;" width="15" height="20.5" viewBox="0 0 15 20.5"><path d="M2 8 L7.5 2.5 L13 8 M2 12.5 L7.5 18 L13 12.5" fill="none" stroke="#fff" stroke-width="2.2" stroke-linecap="round" stroke-linejoin="round"/></svg>
<div id="p_iu" class="t" style="top:708.00px;font-size:22.5px;left:2544.50px;letter-spacing:0.400px;color:#1a1a1a">Spaces</div>
<div id="l_w" class="t" style="top:754.00px;font-size:20.5px;right:360.00px;letter-spacing:0.840px;color:#1a1a1a">Widths</div>
<div class="a fld" style="left:2529px;top:745px;width:134px;height:36px;"></div>
<div class="a fld" style="left:2705px;top:745px;width:136px;height:36px;"></div>
<div id="t4" class="t" style="top:753.00px;font-size:22.5px;right:225.50px;color:#1a1a1a">4</div>
<div id="t5" class="t" style="top:753.00px;font-size:22.5px;right:47.00px;color:#1a1a1a">4</div>
<div class="a " style="left:2667.5px;top:745.5px;width:18.5px;height:34px;border-radius:9px;background:#fff;box-shadow:0 0 0 1px rgba(0,0,0,.10),0 1px 1.5px rgba(0,0,0,.3)"></div>
<svg class="a" style="left:2671px;top:752px;" width="12" height="22" viewBox="0 0 12 22"><path d="M1.5 7 L6 2 L10.5 7 M1.5 15 L6 20 L10.5 15" fill="none" stroke="#333" stroke-width="1.8" stroke-linecap="round" stroke-linejoin="round"/></svg>
<div class="a " style="left:2845.5px;top:745.5px;width:18.5px;height:34px;border-radius:9px;background:#fff;box-shadow:0 0 0 1px rgba(0,0,0,.10),0 1px 1.5px rgba(0,0,0,.3)"></div>
<svg class="a" style="left:2849px;top:752px;" width="12" height="22" viewBox="0 0 12 22"><path d="M1.5 7 L6 2 L10.5 7 M1.5 15 L6 20 L10.5 15" fill="none" stroke="#333" stroke-width="1.8" stroke-linecap="round" stroke-linejoin="round"/></svg>
<div id="l_tab" class="t" style="top:783.00px;font-size:20.5px;left:2579.00px;letter-spacing:0.400px;color:#1a1a1a">Tab</div>
<div id="l_ind" class="t" style="top:783.00px;font-size:20.5px;left:2742.00px;letter-spacing:0.820px;color:#1a1a1a">Indent</div>
<div class="a " style="left:2528.5px;top:818px;width:23.5px;height:23.5px;border-radius:5px;background:linear-gradient(#4fa1fa,#2d88f6)"></div>
<svg class="a" style="left:2532px;top:822px;" width="17" height="16" viewBox="0 0 17 16"><path d="M3 8.5 L7 13 L14 3" fill="none" stroke="#fff" stroke-width="2.4" stroke-linecap="round" stroke-linejoin="round"/></svg>
<div id="l_wrap" class="t" style="top:820.00px;font-size:22.5px;left:2563.00px;letter-spacing:0.333px;color:#1a1a1a">Wrap lines</div>
<div class="a " style="left:2362px;top:874px;width:518px;height:2px;background:#dcdcdc"></div>
<div class="a " style="left:2362px;top:1588px;width:518px;height:70px;background:linear-gradient(rgba(0,0,0,0),rgba(0,0,0,.025) 50%,rgba(0,0,0,.06) 97%,rgba(0,0,0,.2) 100%)"></div>
<svg class="a" style="left:0;top:0" width="2880" height="1658"><path d="M0 0 H7.6 A7.6 7.6 0 0 0 0 7.6Z" fill="#e9e9e9"/><path d="M7.4 0 A7.6 7.6 0 0 0 0 7.4" fill="none" stroke="#858585" stroke-width="1.5"/><path d="M2880 0 V10 A10 10 0 0 0 2870 0Z" fill="#444"/><path d="M0 1658 V1650 A8 8 0 0 0 8 1658Z" fill="#7a7a7a"/><path d="M2880 1658 H2872 A8 8 0 0 0 2880 1650Z" fill="#4a4640"/></svg>
</body></html>
